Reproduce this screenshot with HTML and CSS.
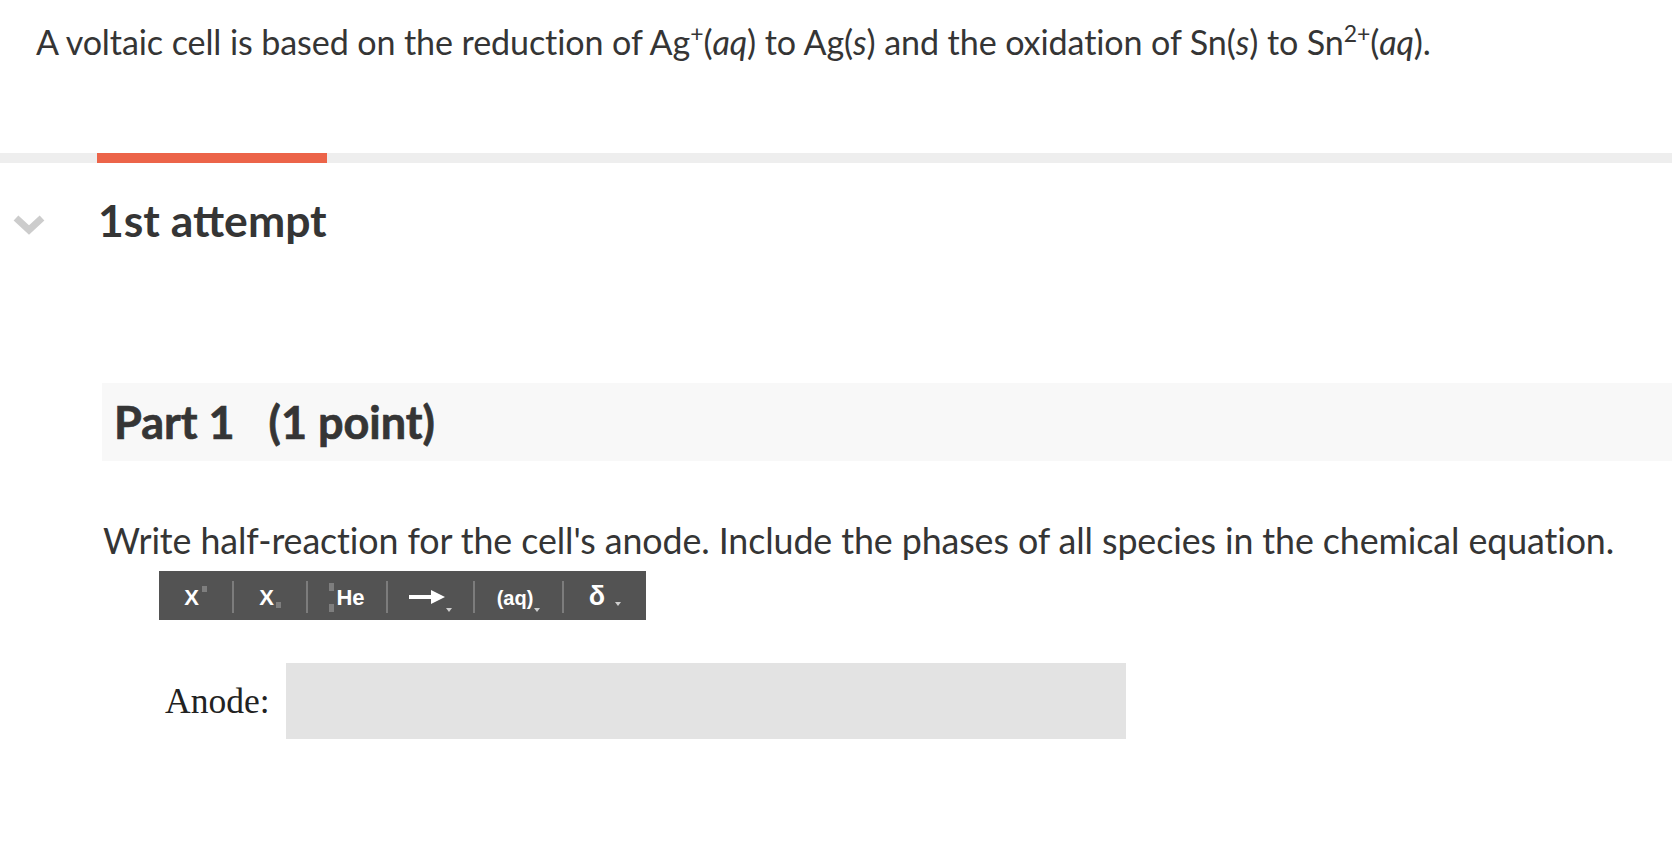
FILE: index.html
```html
<!DOCTYPE html>
<html>
<head>
<meta charset="utf-8">
<link rel="stylesheet" href="styles.css">
</head>
<body>
<div class="stem">A voltaic cell is based on the reduction of Ag<sup>+</sup>(<i>aq</i>) to Ag(<i>s</i>) and the oxidation of Sn(<i>s</i>) to Sn<sup>2+</sup>(<i>aq</i>).</div>

<div class="tabs"><div class="tab-active"></div></div>

<div class="attempt">
  <svg class="chevron" width="32" height="22" viewBox="0 0 32 22"><polyline points="3,5 16,17 29,5" fill="none" stroke="#cccccc" stroke-width="7"/></svg>
  <h2 class="attempt-title">1st attempt</h2>
</div>

<div class="part-header"><span class="part-name">Part 1</span><span class="part-points">(1 point)</span></div>

<p class="prompt">Write half-reaction for the cell's anode. Include the phases of all species in the chemical equation.</p>

<div class="toolbar">
  <div class="btn b1"><span class="glyph">X</span><span class="sq sq-sup"></span></div>
  <div class="sep"></div>
  <div class="btn b2"><span class="glyph">X</span><span class="sq sq-sub"></span></div>
  <div class="sep"></div>
  <div class="btn b3"><span class="iso"><span class="sq"></span><span class="sq"></span></span><span class="glyph">He</span></div>
  <div class="sep"></div>
  <div class="btn b4"><svg class="arrow" width="36" height="16" viewBox="0 0 36 16"><line x1="0" y1="8" x2="26" y2="8" stroke="#fff" stroke-width="4"/><polygon points="22,1 36,8 22,15" fill="#fff"/></svg><span class="tri tri-low"></span></div>
  <div class="sep"></div>
  <div class="btn b5"><span class="glyph small">(aq)</span><span class="tri tri-low"></span></div>
  <div class="sep"></div>
  <div class="btn b6"><span class="glyph delta">δ</span><span class="tri tri-mid"></span></div>
</div>

<div class="answer-row">
  <label class="answer-label">Anode:</label>
  <div class="answer-input"></div>
</div>
</body>
</html>
```

FILE: styles.css
```css
html, body {
  margin: 0;
  padding: 0;
  background: #ffffff;
}
body {
  font-family: "Lato", "Noto Sans", sans-serif;
  color: #353535;
}
.stem {
  margin: 0;
  padding: 22px 0 0 36px;
  font-size: 34.1px;
  line-height: 40px;
  letter-spacing: -0.1px;
}
.stem sup {
  font-size: 23px;
  line-height: 0;
  vertical-align: 0;
  position: relative;
  top: -13px;
}
.stem i { font-style: italic; }

.tabs {
  margin-top: 91px;
  height: 10px;
  background: #eeeeee;
}
.tab-active {
  margin-left: 97px;
  width: 230px;
  height: 10px;
  background: #ec6449;
}

.attempt {
  display: flex;
  align-items: flex-start;
  margin-top: 32px;
}
.chevron {
  margin: 18px 0 0 13px;
  flex: none;
}
.attempt-title {
  margin: 0 0 0 53px;
  font-size: 44.5px;
  line-height: 50px;
  font-weight: 700;
  color: #353535;
}

.part-header {
  margin: 138px 0 0 102px;
  height: 78px;
  background: #f8f8f8;
  padding-left: 12px;
  font-size: 45px;
  line-height: 78px;
  font-weight: 700;
  color: #353535;
  -webkit-text-stroke: 0.7px #353535;
}
.part-points { margin-left: 34px; }

.prompt {
  margin: 60px 0 0 103px;
  font-size: 35.8px;
  line-height: 40px;
  letter-spacing: -0.1px;
}

.toolbar {
  margin: 10px 0 0 159px;
  width: 487px;
  height: 49px;
  background: #535353;
  display: flex;
  align-items: center;
}
.btn {
  height: 49px;
  display: flex;
  align-items: center;
  justify-content: center;
  position: relative;
  color: #ffffff;
  font-family: "Liberation Sans", Arial, sans-serif;
  font-weight: 700;
}
.b1 { width: 73px; }
.b2 { width: 72px; }
.b3 { width: 78px; }
.b4 { width: 85px; }
.b5 { width: 87px; }
.b6 { width: 82px; }
.sep {
  width: 2px;
  height: 32px;
  background: #7c7c7c;
  margin-top: 3px;
}
.glyph {
  font-size: 22px;
  line-height: 24px;
  margin-top: 4px;
}
.glyph.small { font-size: 20px; }
.glyph.delta { font-size: 27px; margin-top: 0; }
.sq {
  display: block;
  width: 5px;
  height: 6px;
  background: #7e7e7e;
}
.sq-sup { align-self: flex-start; margin: 15px 0 0 3px; }
.sq-sub { align-self: flex-start; margin: 31px 0 0 2px; }
.iso {
  display: flex;
  flex-direction: column;
  justify-content: space-between;
  height: 29px;
  margin: 4px 2px 0 0;
}
.iso .sq { height: 8px; }
.arrow { margin-top: 2px; }
.tri {
  display: block;
  width: 0;
  height: 0;
  border-left: 3px solid transparent;
  border-right: 3px solid transparent;
  border-top: 4px solid #cfcfcf;
}
.tri-low { align-self: flex-start; margin: 37px 0 0 1px; }
.tri-mid { align-self: flex-start; margin: 31px 0 0 10px; }

.answer-row {
  display: flex;
  align-items: center;
  margin: 43px 0 0 165px;
}
.answer-label {
  font-family: "Liberation Serif", "Times New Roman", serif;
  font-size: 35.5px;
  color: #222;
  width: 121px;
}
.answer-input {
  width: 840px;
  height: 76px;
  background: #e3e3e3;
}
```
